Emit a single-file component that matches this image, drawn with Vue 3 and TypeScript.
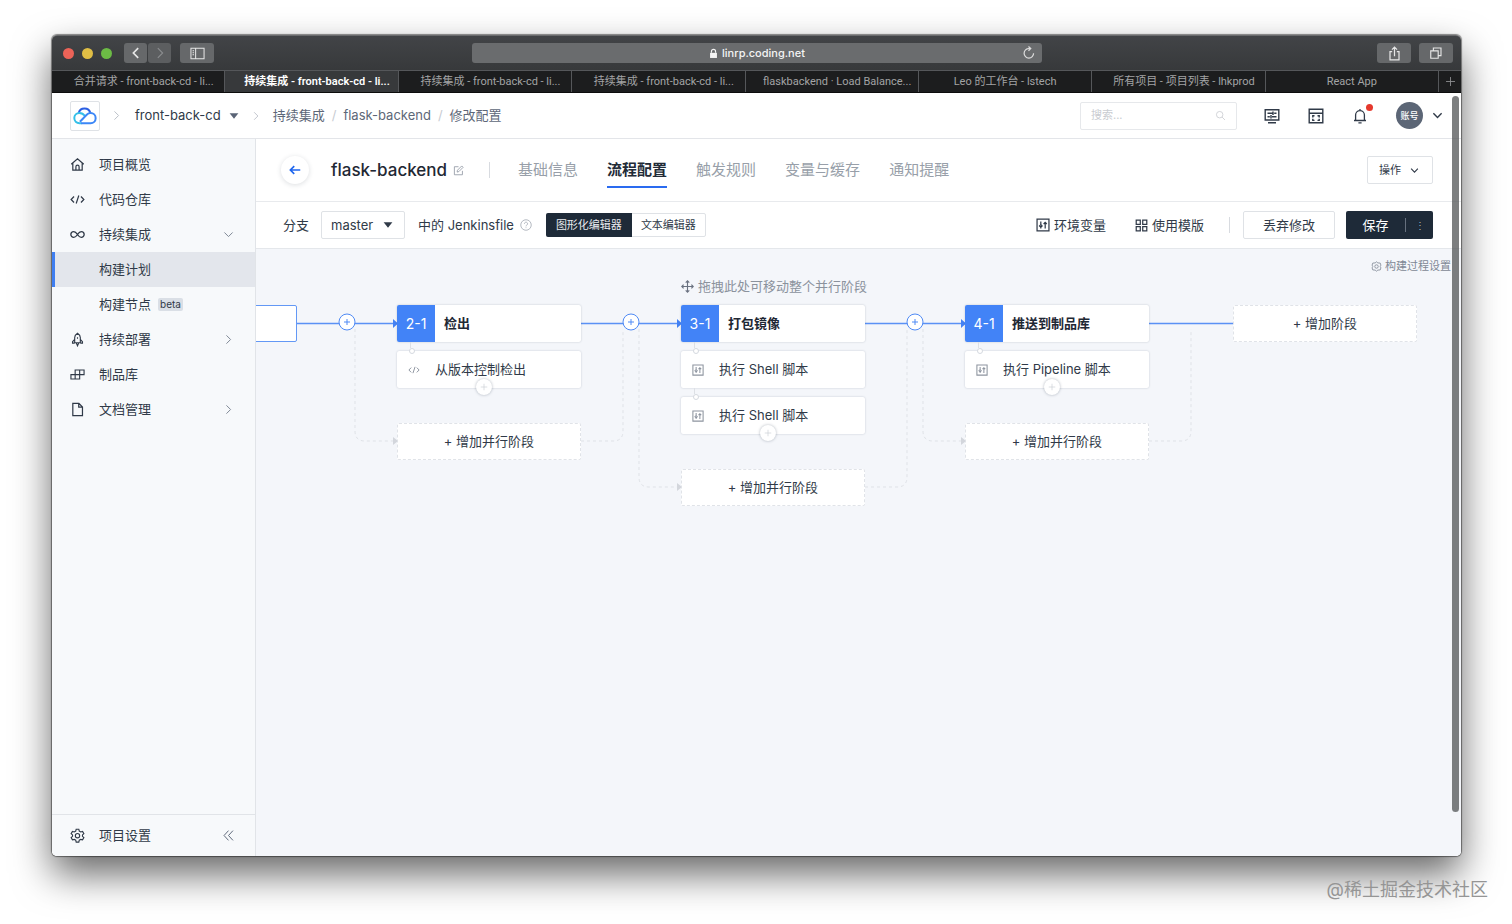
<script setup lang="ts">
import { computed, h, ref } from 'vue'

interface Shape {
  d: string
  fill?: boolean
  width?: number
}

const shapes: Record<string, Shape[]> = {
  back: [{ d: 'M10.5 2.5L5 8l5.5 5.5', width: 1.9 }],
  forward: [{ d: 'M5.5 2.5L11 8l-5.5 5.5', width: 1.3 }],
  panel: [{ d: 'M1 2.5h14v11H1zM6 2.5v11M2.7 5h1.6M2.7 7.2h1.6M2.7 9.4h1.6', width: 1.1 }],
  lock: [{ d: 'M3 7h10v7.5H3z', fill: true }, { d: 'M5 7V5a3 3 0 0 1 6 0v2', width: 1.7 }],
  reload: [{ d: 'M13.2 8.2A5.4 5.4 0 1 1 8 3h1.6M7.4.6L10 3 7.4 5.6', width: 1.4 }],
  share: [{ d: 'M5.5 6H3.2v8.8h9.6V6h-2.3M8 11V1.2M5.3 3.8L8 1.1l2.7 2.7', width: 1.3 }],
  windows: [{ d: 'M2 5.5h8.5V14H2zM5 5.5V2.3h8.7V11h-3.2', width: 1.3 }],
  plus: [{ d: 'M8 1.5v13M1.5 8h13', width: 1.3 }],
  chevronRight: [{ d: 'M5 2l6 6-6 6', width: 1.4 }],
  chevronDown: [{ d: 'M2 5l6 6 6-6', width: 1.4 }],
  chevronDownBold: [{ d: 'M2 4.8L8 11l6-6.2', width: 2 }],
  collapse: [{ d: 'M8 2L2.5 8 8 14M13.5 2L8 8l5.5 6', width: 1.2 }],
  caret: [{ d: 'M1 3.500h14L8 12.500z', fill: true }],
  search: [{ d: 'M11.5 6.8a4.7 4.7 0 1 1-9.4 0 4.7 4.7 0 0 1 9.4 0zM10.3 10.3l4.2 4.2', width: 1.2 }],
  console: [{ d: 'M1.2 1.7h13.6v10.300H1.200zM4 14.700h8M3.500 5.200h5M10.200 5.200h2.300M3.500 8.700h2.300M8 8.700h4.500M9 3.500v3.400M7 7v3.400', width: 1.4 }],
  board: [{ d: 'M1.2 1.2h13.6v13.6H1.2zM1.2 5.200h13.6M6.500 7.800H4.800v1.600M4.800 10.800v1.600h1.700M9.500 7.800h1.700v1.600M11.200 10.800v1.600H9.500', width: 1.4 }],
  bell: [{ d: 'M2 12.500h12M3.600 12.500V7a4.400 4.400 0 0 1 8.800 0v5.500M8 2.500V.9M6.400 14.800h3.200', width: 1.3 }],
  home: [{ d: 'M1.3 7.8L8 2l6.7 5.8M3 6.700V14h10V6.700M6.300 14v-3.600a1.700 1.700 0 0 1 3.400 0V14', width: 1.3 }],
  code: [{ d: 'M4.3 4.800L1.200 8l3.100 3.200M11.700 4.800L14.800 8l-3.100 3.200M9.400 3.800L6.600 12.200', width: 1.3 }],
  infinity: [{ d: 'M8 8C6.500 5.700 5.400 4.900 4 4.900a3.100 3.100 0 0 0 0 6.200c1.400 0 2.500-.8 4-3.100s2.600-3.100 4-3.100a3.100 3.100 0 0 1 0 6.200c-1.400 0-2.500-.8-4-3.100z', width: 1.4 }],
  rocket: [{ d: 'M5 11.500V5.800C5 3.800 6.300 2.400 8 1.300c1.700 1.100 3 2.500 3 4.500v5.700zM5 8L2.700 10.300v1.500H5M11 8l2.300 2.300v1.500H11M8 5.500v1.800M6.700 11.700L8 14.700l1.300-3', width: 1.2 }],
  artifact: [{ d: 'M5.500 3.200H15v4.900H5.500zM10.300 3.200v9.600M1 8.100h9.300v4.700H1zM5.500 8.100v4.700', width: 1.2 }],
  doc: [{ d: 'M3 1.500h6.500L13.300 5.300v9.200H3zM9.300 1.700v3.800h3.800', width: 1.3 }],
  gear: [{ d: 'M6.600 1.300h2.800l.5 2 1.500.9 2-.6 1.400 2.400-1.500 1.400v1.500l1.500 1.400-1.400 2.400-2-.6-1.500.9-.5 2H6.600l-.5-2-1.500-.9-2 .6-1.400-2.400 1.500-1.400V7.400L1.200 6l1.400-2.400 2 .6 1.500-.9zM10.300 8.200a2.300 2.300 0 1 1-4.600 0 2.300 2.300 0 0 1 4.600 0z', width: 1.2 }],
  hexGear: [{ d: 'M8 1.200l2 1.600 3.400.2 1 3-1 2 1 2-1 3-3.400.2L8 14.800l-2-1.600-3.400-.2-1-3 1-2-1-2 1-3 3.400-.2zM10.500 8a2.500 2.500 0 1 1-5 0 2.500 2.500 0 0 1 5 0z', width: 1.2 }],
  arrowLeft: [{ d: 'M15 8H2M7 2.800L1.800 8 7 13.200', width: 2.2 }],
  edit: [{ d: 'M8 2.500H2v11.700h11.700V8.500M6 10.300l.5-2.700 6.200-6.200 2 2-6.200 6.200z', width: 1.2 }],
  help: [{ d: 'M15 8A7 7 0 1 1 1 8a7 7 0 0 1 14 0zM5.900 6.300a2.100 2.100 0 1 1 3.200 1.800c-.8.5-1.100.8-1.100 1.700M8 11.200v1', width: 1.1 }],
  sliders: [{ d: 'M1.200 1.200h13.600v13.600H1.200zM5.500 4v3.500M5.500 10.500V12M10.500 6V12M5.500 7.500L4 9l1.500 1.500L7 9zM8.700 6.800l1.800-1.800 1.800 1.800', width: 1.4 }],
  grid: [{ d: 'M1.500 1.500h5v5h-5zM9.500 1.500h5v5h-5zM1.500 9.500h5v5h-5zM9.500 9.500h5v5h-5z', width: 1.5 }],
  move: [{ d: 'M8 1v14M1 8h14M5.800 3.200L8 1l2.200 2.200M5.800 12.800L8 15l2.200-2.200M3.200 5.800L1 8l2.200 2.200M12.800 5.800L15 8l-2.200 2.200', width: 1.4 }],
}

const Icon = (props: { name: string; size: number }) =>
  h(
    'svg',
    { class: 'icon', width: props.size, height: props.size, viewBox: '0 0 16 16', 'aria-hidden': 'true' },
    shapes[props.name].map((s) =>
      h('path', {
        d: s.d,
        fill: s.fill ? 'currentColor' : 'none',
        stroke: s.fill ? 'none' : 'currentColor',
        'stroke-width': s.width ?? 1.3,
      }),
    ),
  )
Icon.props = ['name', 'size']

const browserTabs = [
  { title: '合并请求 - front-back-cd - li...', long: true },
  { title: '持续集成 - front-back-cd - li...', long: true, active: true },
  { title: '持续集成 - front-back-cd - li...', long: true },
  { title: '持续集成 - front-back-cd - li...', long: true },
  { title: 'flaskbackend · Load Balance...', long: true },
  { title: 'Leo 的工作台 - lstech' },
  { title: '所有项目 - 项目列表 - lhkprod', long: true },
  { title: 'React App' },
]

const menu = [
  { label: '项目概览', icon: 'home' },
  { label: '代码仓库', icon: 'code' },
  { label: '持续集成', icon: 'infinity', arrow: 'chevronDown' },
  { label: '构建计划', active: true },
  { label: '构建节点', badge: 'beta' },
  { label: '持续部署', icon: 'rocket', arrow: 'chevronRight' },
  { label: '制品库', icon: 'artifact' },
  { label: '文档管理', icon: 'doc', arrow: 'chevronRight' },
]

const pageTabs = ['基础信息', '流程配置', '触发规则', '变量与缓存', '通知提醒']
const activeTab = ref('流程配置')
const branch = ref('master')
const keyword = ref('')

interface Stage {
  x: number
  no: string
  title: string
  steps: { icon: string; label: string }[]
  movable?: boolean
}

const stages: Stage[] = [
  { x: 141, no: '2-1', title: '检出', steps: [{ icon: 'code', label: '从版本控制检出' }] },
  {
    x: 425,
    no: '3-1',
    title: '打包镜像',
    movable: true,
    steps: [
      { icon: 'sliders', label: '执行 Shell 脚本' },
      { icon: 'sliders', label: '执行 Shell 脚本' },
    ],
  },
  { x: 709, no: '4-1', title: '推送到制品库', steps: [{ icon: 'sliders', label: '执行 Pipeline 脚本' }] },
]

const NODE_WIDTH = 184
const LINE_Y = 74

const branches = computed(() =>
  stages.map((s) => {
    const y = 146 + s.steps.length * 46
    const left = s.x - 42
    const right = s.x + NODE_WIDTH + 42
    return {
      y,
      x: s.x,
      into: `M${left} 80V${y - 10}Q${left} ${y} ${left + 10} ${y}H${s.x - 4}`,
      out: `M${s.x + NODE_WIDTH} ${y}H${right - 10}Q${right} ${y} ${right} ${y - 10}V80`,
    }
  }),
)
</script>

<template>
  <div class="desktop">
    <div class="window">
      <div class="titlebar">
        <div class="tb-left">
          <div class="lights"><i class="red"></i><i class="yellow"></i><i class="green"></i></div>
          <div class="nav-buttons">
            <button class="tb-btn small" aria-label="后退"><Icon name="back" :size="14" /></button>
            <button class="tb-btn small dim" aria-label="前进"><Icon name="forward" :size="14" /></button>
          </div>
          <button class="tb-btn" aria-label="边栏"><Icon name="panel" :size="15" /></button>
        </div>
        <div class="address">
          <span class="address-text"><Icon name="lock" :size="11" />linrp.coding.net</span>
          <button class="reload" aria-label="重新载入"><Icon name="reload" :size="14" /></button>
        </div>
        <div class="tb-right">
          <button class="tb-btn" aria-label="共享"><Icon name="share" :size="15" /></button>
          <button class="tb-btn" aria-label="标签页概览"><Icon name="windows" :size="14" /></button>
        </div>
      </div>

      <div class="tabstrip">
        <button
          v-for="(t, i) in browserTabs"
          :key="i"
          class="tab"
          :class="{ active: t.active, long: t.long }"
        >{{ t.title }}</button>
        <button class="new-tab" aria-label="新标签页"><Icon name="plus" :size="11" /></button>
      </div>

      <div class="app">
        <header class="topbar">
          <a href="#" class="logo" aria-label="CODING">
            <svg width="24" height="18" viewBox="0 0 24 18" fill="none" stroke-width="2">
              <path d="M5.700 6C6.300 3.300 8.600 1.400 11.500 1.400s5.200 1.800 5.900 4.600" stroke="#2b5fe3" />
              <path d="M12 9C10.400 6.900 8.500 6 6.400 6a5.100 5.100 0 0 0 0 10.200h2.200" stroke="#35c0e8" />
              <path d="M8 16.200h9.600a5.050 5.050 0 0 0 0-10.100c-1.600 0-2.800.6-3.900 1.700L6.900 14.800" stroke="#3c87f7" />
            </svg>
          </a>
          <Icon class="sep first" name="chevronRight" :size="11" />
          <button class="project">front-back-cd<Icon name="caret" :size="10" /></button>
          <Icon class="sep" name="chevronRight" :size="10" />
          <nav class="crumbs" aria-label="路径">
            <a href="#">持续集成</a><span>/</span><a href="#">flask-backend</a><span>/</span><a href="#">修改配置</a>
          </nav>
          <label class="search">
            <input v-model="keyword" type="text" placeholder="搜索..." aria-label="搜索" />
            <Icon name="search" :size="11" />
          </label>
          <div class="tools">
            <button class="plain" aria-label="工作台"><Icon name="console" :size="16" /></button>
            <button class="plain" aria-label="看板"><Icon name="board" :size="16" /></button>
            <button class="plain bell" aria-label="通知"><Icon name="bell" :size="16" /><i class="dot"></i></button>
          </div>
          <button class="account"><span class="avatar">账号</span><Icon name="chevronDownBold" :size="11" /></button>
        </header>

        <div class="body">
          <aside class="sidebar">
            <nav class="menu" aria-label="项目菜单">
              <a v-for="m in menu" :key="m.label" href="#" class="item" :class="{ active: m.active }">
                <span class="slot"><Icon v-if="m.icon" :name="m.icon" :size="15" /></span>
                <span>{{ m.label }}</span>
                <span v-if="m.badge" class="badge">{{ m.badge }}</span>
                <Icon v-if="m.arrow" class="arrow" :name="m.arrow" :size="11" />
              </a>
            </nav>
            <div class="side-foot">
              <a href="#" class="item">
                <span class="slot"><Icon name="gear" :size="15" /></span>
                <span>项目设置</span>
              </a>
              <button class="plain fold" aria-label="收起"><Icon name="collapse" :size="13" /></button>
            </div>
          </aside>

          <main class="main">
            <div class="page-head">
              <button class="back" aria-label="返回"><Icon name="arrowLeft" :size="12" /></button>
              <h1>flask-backend</h1>
              <button class="plain edit" aria-label="编辑名称"><Icon name="edit" :size="11" /></button>
              <i class="rule"></i>
              <nav class="page-tabs" aria-label="配置">
                <button
                  v-for="t in pageTabs"
                  :key="t"
                  class="page-tab"
                  :class="{ active: t === activeTab }"
                  @click="activeTab = t"
                >{{ t }}</button>
              </nav>
              <button class="btn actions">操作<Icon name="chevronDownBold" :size="9" /></button>
            </div>

            <div class="toolbar">
              <label for="branch">分支</label>
              <span class="select">
                <select id="branch" v-model="branch"><option>master</option></select>
                <Icon name="caret" :size="10" />
              </span>
              <span class="jf">中的 Jenkinsfile</span>
              <button class="plain help" aria-label="帮助"><Icon name="help" :size="12" /></button>
              <div class="segmented">
                <button class="on">图形化编辑器</button>
                <button>文本编辑器</button>
              </div>
              <div class="tool-right">
                <button class="plain link"><Icon name="sliders" :size="14" />环境变量</button>
                <button class="plain link"><Icon name="grid" :size="13" />使用模版</button>
                <i class="rule"></i>
                <button class="btn discard">丢弃修改</button>
                <div class="save">
                  <button>保存</button>
                  <button class="more" aria-label="更多">⋮</button>
                </div>
              </div>
            </div>

            <section class="canvas" aria-label="流程">
              <button class="plain process"><Icon name="hexGear" :size="11" />构建过程设置</button>

              <svg class="edges" width="1200" height="600" fill="none">
                <g class="dashed">
                  <template v-for="b in branches" :key="b.x">
                    <path :d="b.into" />
                    <path :d="b.out" />
                  </template>
                </g>
                <g class="grey-tips">
                  <path v-for="b in branches" :key="b.x" :d="`M${b.x - 4} ${b.y - 4}l5 4-5 4z`" />
                </g>
                <path class="main-line" :d="`M41 ${LINE_Y}.5H977`" />
                <g class="tips">
                  <path v-for="s in stages" :key="s.no" :d="`M${s.x - 4} ${LINE_Y - 4}l5 4.5-5 4.5z`" />
                </g>
                <g class="joints">
                  <g v-for="s in stages" :key="s.no">
                    <circle :cx="s.x - 50" :cy="LINE_Y - 1" r="8" />
                    <path :d="`M${s.x - 53} ${LINE_Y - 1}h6M${s.x - 50} ${LINE_Y - 4}v6`" />
                  </g>
                </g>
              </svg>

              <div class="first-node"></div>

              <div v-for="s in stages" :key="s.no" class="stage" :style="{ left: s.x + 'px' }">
                <div v-if="s.movable" class="move-hint"><Icon name="move" :size="13" />拖拽此处可移动整个并行阶段</div>
                <button class="stage-head"><b>{{ s.no }}</b><strong>{{ s.title }}</strong></button>
                <button v-for="(p, i) in s.steps" :key="i" class="step">
                  <Icon :name="p.icon" :size="12" /><span>{{ p.label }}</span>
                  <i v-if="i === s.steps.length - 1" class="add-step"><Icon name="plus" :size="8" /></i>
                </button>
                <button class="add">+ 增加并行阶段</button>
              </div>

              <button class="add last">+ 增加阶段</button>
            </section>
          </main>
        </div>
        <i class="scrollbar"></i>
      </div>
    </div>
    <div class="watermark">@稀土掘金技术社区</div>
  </div>
</template>

<style>
body {
  background: #fff;
}
</style>

<style scoped>
* {
  box-sizing: border-box;
}
.desktop {
  position: relative;
  display: flex;
  min-height: 100vh;
  padding: 35px 51px 68px 52px;
  overflow: hidden;
  font-family: Inter, 'Noto Sans CJK SC', sans-serif;
  font-size: 13px;
  line-height: 19px;
  color: #303a48;
}
button,
input,
select {
  margin: 0;
  padding: 0;
  border: 0;
  background: none;
  font: inherit;
  color: inherit;
  outline: none;
}
a {
  color: inherit;
  text-decoration: none;
}
.icon {
  display: block;
  flex: none;
}
.window {
  flex: 1;
  min-width: 0;
  display: flex;
  flex-direction: column;
  border-radius: 5px;
  box-shadow: 0 0 1px 1px rgba(0, 0, 0, 0.45), 0 18px 38px rgba(0, 0, 0, 0.6);
}

/* browser frame */
.titlebar {
  display: grid;
  grid-template-columns: 1fr minmax(200px, 570px) 1fr;
  align-items: center;
  height: 35px;
  padding: 0 8px;
  border-radius: 5px 5px 0 0;
  background: linear-gradient(#424447, #37393b);
  border-top: 1px solid #6a6b6d;
  color: #e6e6e6;
}
.tb-left,
.tb-right,
.nav-buttons,
.lights {
  display: flex;
  align-items: center;
}
.lights {
  gap: 8px;
  margin: 0 12px 0 3px;
}
.lights i {
  width: 11px;
  height: 11px;
  border-radius: 50%;
}
.red {
  background: #ec6358;
}
.yellow {
  background: #e0be45;
}
.green {
  background: #6cbb45;
}
.nav-buttons {
  gap: 1px;
  margin-right: 9px;
}
.tb-btn {
  display: flex;
  align-items: center;
  justify-content: center;
  width: 34px;
  height: 20px;
  border-radius: 3px;
  background: #66686a;
}
.tb-btn.small {
  width: 23px;
}
.tb-btn.dim {
  background: #5c5e60;
  color: #8b8d8f;
}
.tb-right {
  justify-content: flex-end;
  gap: 8px;
}
.address {
  display: grid;
  grid-template-columns: 20px 1fr 20px;
  align-items: center;
  height: 20px;
  border-radius: 3px;
  background: #6a6c6e;
  font-size: 11px;
  font-weight: 500;
  color: #f4f4f4;
}
.address-text {
  grid-column: 2;
  display: flex;
  align-items: center;
  justify-content: center;
  gap: 3px;
}
.reload {
  color: #dcdcdc;
}
.tabstrip {
  display: grid;
  grid-template-columns: repeat(8, minmax(0, 1fr)) 22px;
  height: 23px;
  border-top: 1px solid #55575a;
  border-bottom: 1px solid #0c0c0c;
  background: #1c1d1e;
}
.tab {
  overflow: hidden;
  border-right: 1px solid #55575a;
  font-size: 11px;
  line-height: 21px;
  white-space: nowrap;
  color: #a3a4a5;
  font-family: Roboto, 'Noto Sans CJK SC', sans-serif;
}
.tab.long {
  padding-left: 11px;
}
.tab.active {
  background: #37393b;
  font-weight: 600;
  color: #fff;
}
.new-tab {
  display: flex;
  align-items: center;
  justify-content: center;
  color: #8c8e90;
}

/* application */
.app {
  position: relative;
  flex: 1;
  display: flex;
  flex-direction: column;
  overflow: hidden;
  border-radius: 0 0 5px 5px;
  background: #fff;
}
.scrollbar {
  position: absolute;
  top: 3px;
  right: 2px;
  bottom: 44px;
  width: 7px;
  border-radius: 4px;
  background: rgba(80, 82, 84, 0.74);
}
.topbar {
  display: flex;
  align-items: center;
  height: 46px;
  padding: 0 18px;
  border-bottom: 1px solid #e3e5e9;
}
.logo {
  display: flex;
  align-items: center;
  justify-content: center;
  width: 30px;
  height: 30px;
  border: 1px solid #dfe2e6;
  border-radius: 2px;
}
.sep {
  color: #b9bec6;
}
.sep.first {
  margin: 0 13px 0 11px;
}
.project {
  display: flex;
  align-items: center;
  gap: 8px;
  margin-right: 12px;
}
.project .icon {
  color: #5a6476;
}
.crumbs {
  display: flex;
  gap: 7px;
  margin-left: 12px;
  color: #5d6778;
}
.crumbs span {
  color: #c8ccd2;
}
.search {
  display: flex;
  align-items: center;
  width: 157px;
  height: 28px;
  margin-left: auto;
  padding: 0 10px;
  border: 1px solid #e6e8eb;
  border-radius: 2px;
  color: #c9ccd1;
}
.search input {
  flex: 1;
  min-width: 0;
  font-size: 11px;
  color: #303a48;
}
.search input::placeholder {
  color: #c9ccd1;
}
.plain {
  display: flex;
  align-items: center;
}
.tools {
  display: flex;
  gap: 28px;
  margin: 0 28px 0 27px;
}
.bell {
  position: relative;
}
.dot {
  position: absolute;
  top: -4px;
  right: -5px;
  width: 7px;
  height: 7px;
  border-radius: 50%;
  background: #e5392d;
}
.account {
  display: flex;
  align-items: center;
  gap: 9px;
}
.avatar {
  width: 27px;
  height: 27px;
  border-radius: 50%;
  background: #5c6676;
  font-size: 9px;
  font-weight: 500;
  line-height: 27px;
  text-align: center;
  color: #fff;
}
.body {
  flex: 1;
  display: flex;
  min-height: 0;
}
.sidebar {
  flex: none;
  display: flex;
  flex-direction: column;
  justify-content: space-between;
  width: 204px;
  border-right: 1px solid #e1e4e8;
  background: #f7f9fb;
}
.menu {
  padding-top: 8px;
}
.item {
  display: flex;
  align-items: center;
  height: 35px;
  padding: 0 21px 0 18px;
}
.item.active {
  padding-left: 15px;
  border-left: 3px solid #3f7ef0;
  background: #e3e6ec;
}
.slot {
  width: 29px;
}
.badge {
  margin-left: 7px;
  padding: 0 2px;
  border-radius: 2px;
  background: #dadfe6;
  font-size: 10px;
  line-height: 13px;
}
.arrow {
  margin-left: auto;
  color: #7b8492;
}
.side-foot {
  display: flex;
  align-items: center;
  justify-content: space-between;
  height: 42px;
  border-top: 1px solid #e1e4e8;
}
.fold {
  margin-right: 20px;
  color: #5d6778;
}
.main {
  flex: 1;
  min-width: 0;
  display: flex;
  flex-direction: column;
}
.page-head {
  display: flex;
  align-items: center;
  height: 63px;
  padding: 0 28px 0 25px;
  border-bottom: 1px solid #e8eaed;
}
.back {
  display: flex;
  align-items: center;
  justify-content: center;
  width: 28px;
  height: 28px;
  border-radius: 50%;
  box-shadow: 0 1px 5px rgba(40, 50, 70, 0.16);
  color: #1f66ee;
}
h1 {
  margin: 0 6px 0 22px;
  font-size: 17px;
  font-weight: 500;
  color: #1f2834;
}
.edit {
  color: #8f97a3;
}
.rule {
  width: 1px;
  height: 16px;
  background: #d8dbe0;
}
.page-head .rule {
  margin: 0 28px 0 25px;
}
.page-tabs {
  display: flex;
  gap: 29px;
}
.page-tab {
  height: 35px;
  border-bottom: 2px solid transparent;
  font-size: 15px;
  color: #989fa9;
}
.page-tab.active {
  border-bottom-color: #2a6bf0;
  font-weight: 600;
  color: #222b37;
}
.btn {
  height: 28px;
  border: 1px solid #dfe2e6;
  border-radius: 2px;
  background: #fff;
}
.actions {
  display: flex;
  align-items: center;
  gap: 9px;
  margin-left: auto;
  padding: 0 13px 0 11px;
  font-size: 11px;
}
.toolbar {
  display: flex;
  align-items: center;
  height: 47px;
  padding: 0 28px 0 27px;
  border-bottom: 1px solid #e4e7eb;
}
.select {
  display: flex;
  align-items: center;
  width: 84px;
  height: 28px;
  margin: 0 13px 0 12px;
  padding-right: 11px;
  border: 1px solid #dfe2e6;
  border-radius: 2px;
}
.select select {
  flex: 1;
  min-width: 0;
  height: 26px;
  padding-left: 9px;
  appearance: none;
}
.help {
  margin: 0 14px 0 6px;
  color: #a5abb5;
}
.segmented {
  display: flex;
  height: 24px;
  border: 1px solid #dfe2e6;
  border-radius: 2px;
  font-size: 11px;
  line-height: 22px;
}
.segmented button {
  padding: 0 9px;
}
.segmented .on {
  margin: -1px 0 -1px -1px;
  padding: 0 10px;
  border-radius: 2px 0 0 2px;
  background: #1e2a38;
  color: #e9ecf0;
}
.tool-right {
  display: flex;
  align-items: center;
  margin-left: auto;
}
.link {
  gap: 4px;
  margin-right: 29px;
}
.link + .rule {
  margin: 0 13px 0 -4px;
}
.discard {
  width: 92px;
  margin-right: 11px;
}
.save {
  display: flex;
  align-items: center;
  width: 87px;
  height: 28px;
  border-radius: 2px;
  background: #1e2a38;
  color: #fff;
}
.save button:first-child {
  flex: 1;
}
.save .more {
  width: 28px;
  height: 14px;
  border-left: 1px solid #66707e;
  font-size: 10px;
  line-height: 14px;
  color: #a9b0ba;
}

/* pipeline canvas */
.canvas {
  position: relative;
  flex: 1;
  overflow: hidden;
  background: #f4f6fa;
}
.process {
  position: absolute;
  top: 8px;
  right: 10px;
  gap: 3px;
  font-size: 11px;
  color: #7f8895;
}
.edges {
  position: absolute;
  top: 0;
  left: 0;
}
.dashed {
  stroke: #dfe2e7;
  stroke-dasharray: 3 3;
}
.grey-tips {
  fill: #d3d6dc;
}
.main-line {
  stroke: #5a91f5;
  stroke-width: 1.4;
}
.tips {
  fill: #4381f4;
}
.joints circle {
  fill: #fff;
  stroke: #4f8af5;
}
.joints path {
  stroke: #4f8af5;
}
.first-node {
  position: absolute;
  top: 56px;
  left: -143px;
  width: 184px;
  height: 37px;
  border: 1px solid #6398f5;
  border-radius: 2px;
  background: #fff;
}
.stage {
  position: absolute;
  top: 56px;
  display: flex;
  flex-direction: column;
  gap: 9px;
  width: 184px;
}
.move-hint {
  position: absolute;
  top: -28px;
  left: 0;
  display: flex;
  align-items: center;
  gap: 4px;
  white-space: nowrap;
  color: #8b929d;
}
.move-hint .icon {
  color: #6a7280;
}
.stage-head {
  display: flex;
  align-items: center;
  height: 37px;
  border-radius: 2px;
  background: #fff;
  box-shadow: 0 0 2px rgba(30, 45, 70, 0.26);
  color: #1f2834;
}
.stage-head b {
  width: 38px;
  margin-right: 9px;
  border-radius: 2px 0 0 2px;
  background: #4283f7;
  font-size: 14px;
  font-weight: 400;
  line-height: 37px;
  color: #fff;
}
.stage-head strong {
  font-weight: 600;
}
.step {
  position: relative;
  display: flex;
  align-items: center;
  gap: 15px;
  height: 37px;
  padding-left: 11px;
  border-radius: 2px;
  background: #fff;
  box-shadow: 0 0 2px rgba(30, 45, 70, 0.24);
}
.step > .icon {
  color: #8d949f;
}
.step::before {
  content: '';
  position: absolute;
  top: -3px;
  left: 12px;
  width: 4px;
  height: 4px;
  border: 1px solid #d5d9df;
  border-radius: 50%;
  background: #fff;
}
.step::after {
  content: '';
  position: absolute;
  top: -9px;
  left: 13px;
  width: 1px;
  height: 6px;
  background: #dde0e5;
}
.add-step {
  position: absolute;
  bottom: -7px;
  left: 79px;
  display: flex;
  align-items: center;
  justify-content: center;
  width: 16px;
  height: 16px;
  border-radius: 50%;
  background: #fff;
  box-shadow: 0 0 3px rgba(30, 45, 70, 0.35);
  color: #c9cdd4;
}
.add {
  height: 37px;
  border: 1px dashed #e0e3e8;
  border-radius: 2px;
  background: #fff;
}
.stage .add {
  margin-top: 26px;
}
.add.last {
  position: absolute;
  top: 56px;
  left: 977px;
  width: 184px;
}
.watermark {
  position: absolute;
  right: 24px;
  bottom: 21px;
  font-size: 18px;
  line-height: 26px;
  color: #959595;
}
</style>
